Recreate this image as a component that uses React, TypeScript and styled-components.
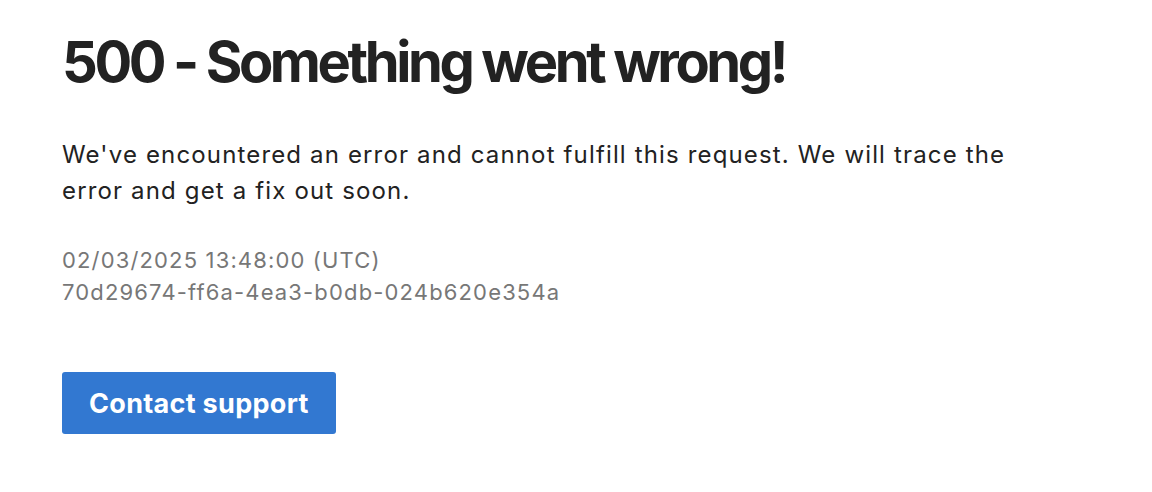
import React from "react";
import styled, { createGlobalStyle } from "styled-components";

const GlobalStyle = createGlobalStyle`
  body {
    margin: 0;
    background: #ffffff;
    font-family: Inter, "Noto Sans", sans-serif;
    color: #222222;
  }
`;

const Page = styled.main`
  display: flex;
  flex-direction: column;
  align-items: flex-start;
  padding: 22px 62px;
`;

const Title = styled.h1`
  margin: 0;
  font-size: 56px;
  font-weight: 700;
  letter-spacing: -3.4px;
  line-height: 80px;
  color: #222222;
`;

const Lead = styled.p`
  margin: 35px 0 0;
  font-size: 24px;
  line-height: 36px;
  letter-spacing: 1.15px;
  max-width: 1010px;
  color: #222222;
`;

const Meta = styled.div`
  margin-top: 35px;
  font-size: 22px;
  line-height: 32px;
  letter-spacing: 1.15px;
  color: #777777;
`;

const SupportButton = styled.button`
  margin-top: 64px;
  height: 62px;
  padding: 0 27px;
  border: 0;
  border-radius: 3px;
  background: #3278d1;
  color: #ffffff;
  font-family: Inter, "Noto Sans", sans-serif;
  font-size: 27px;
  font-weight: 700;
  letter-spacing: 0.3px;
  cursor: pointer;
`;

export default function App() {
  return (
    <>
      <GlobalStyle />
      <Page>
        <Title>500 - Something went wrong!</Title>
        <Lead>
          We've encountered an error and cannot fulfill this request. We will trace the error and get a fix out soon.
        </Lead>
        <Meta>
          <div>02/03/2025 13:48:00 (UTC)</div>
          <div>70d29674-ff6a-4ea3-b0db-024b620e354a</div>
        </Meta>
        <SupportButton>Contact support</SupportButton>
      </Page>
    </>
  );
}
